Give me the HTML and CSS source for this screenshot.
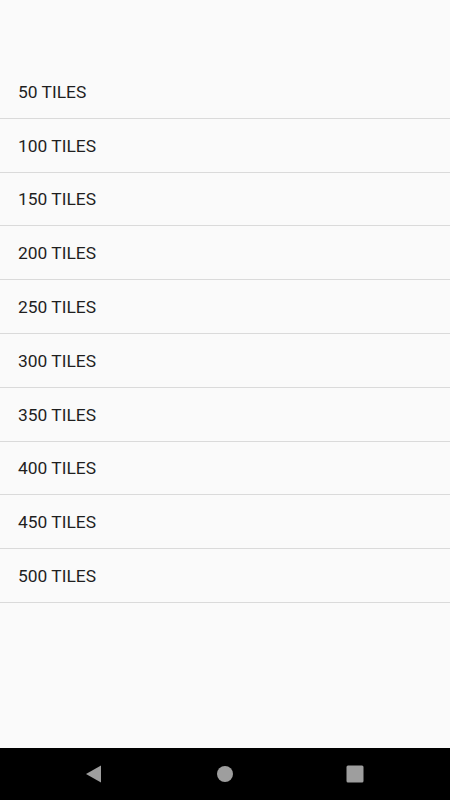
FILE: index.html
```html
<!DOCTYPE html>
<html>
<head>
<meta charset="utf-8">
<link rel="stylesheet" href="styles.css">
</head>
<body>
<div class="screen">
  <ul class="list">
    <li class="row">50 TILES</li>
    <li class="row">100 TILES</li>
    <li class="row">150 TILES</li>
    <li class="row">200 TILES</li>
    <li class="row">250 TILES</li>
    <li class="row">300 TILES</li>
    <li class="row">350 TILES</li>
    <li class="row">400 TILES</li>
    <li class="row">450 TILES</li>
    <li class="row">500 TILES</li>
  </ul>
  <div class="navbar">
    <svg class="nav-icon" width="18" height="18" viewBox="0 0 18 18"><path d="M16 0.5 L16 17.5 L1 9 Z" fill="#9e9e9e"/></svg>
    <svg class="nav-icon" width="18" height="18" viewBox="0 0 18 18"><circle cx="9" cy="9" r="8" fill="#9e9e9e"/></svg>
    <svg class="nav-icon" width="18" height="18" viewBox="0 0 18 18"><rect x="0.5" y="0.5" width="17" height="17" rx="1.5" fill="#9e9e9e"/></svg>
  </div>
</div>
</body>
</html>
```
FILE: styles.css
```css
html, body {
  margin: 0;
  padding: 0;
  background: #fafafa;
}
.screen {
  width: 450px;
  height: 800px;
  display: flex;
  flex-direction: column;
  font-family: Roboto, "Noto Sans", sans-serif;
}
.list {
  list-style: none;
  margin: 0;
  padding: 65px 0 0 0;
  flex: 1;
}
.row {
  height: 51.8px;
  border-bottom: 1px solid #dadada;
  display: flex;
  align-items: center;
  padding-left: 18px;
  padding-top: 1px;
  font-size: 17.4px;
  color: #1f1f1f;
}
.navbar {
  height: 52px;
  background: #000;
  display: flex;
  align-items: center;
  justify-content: space-between;
  padding: 0 86px 0 85px;
  box-sizing: border-box;
}
.nav-icon {
  display: block;
}
```
